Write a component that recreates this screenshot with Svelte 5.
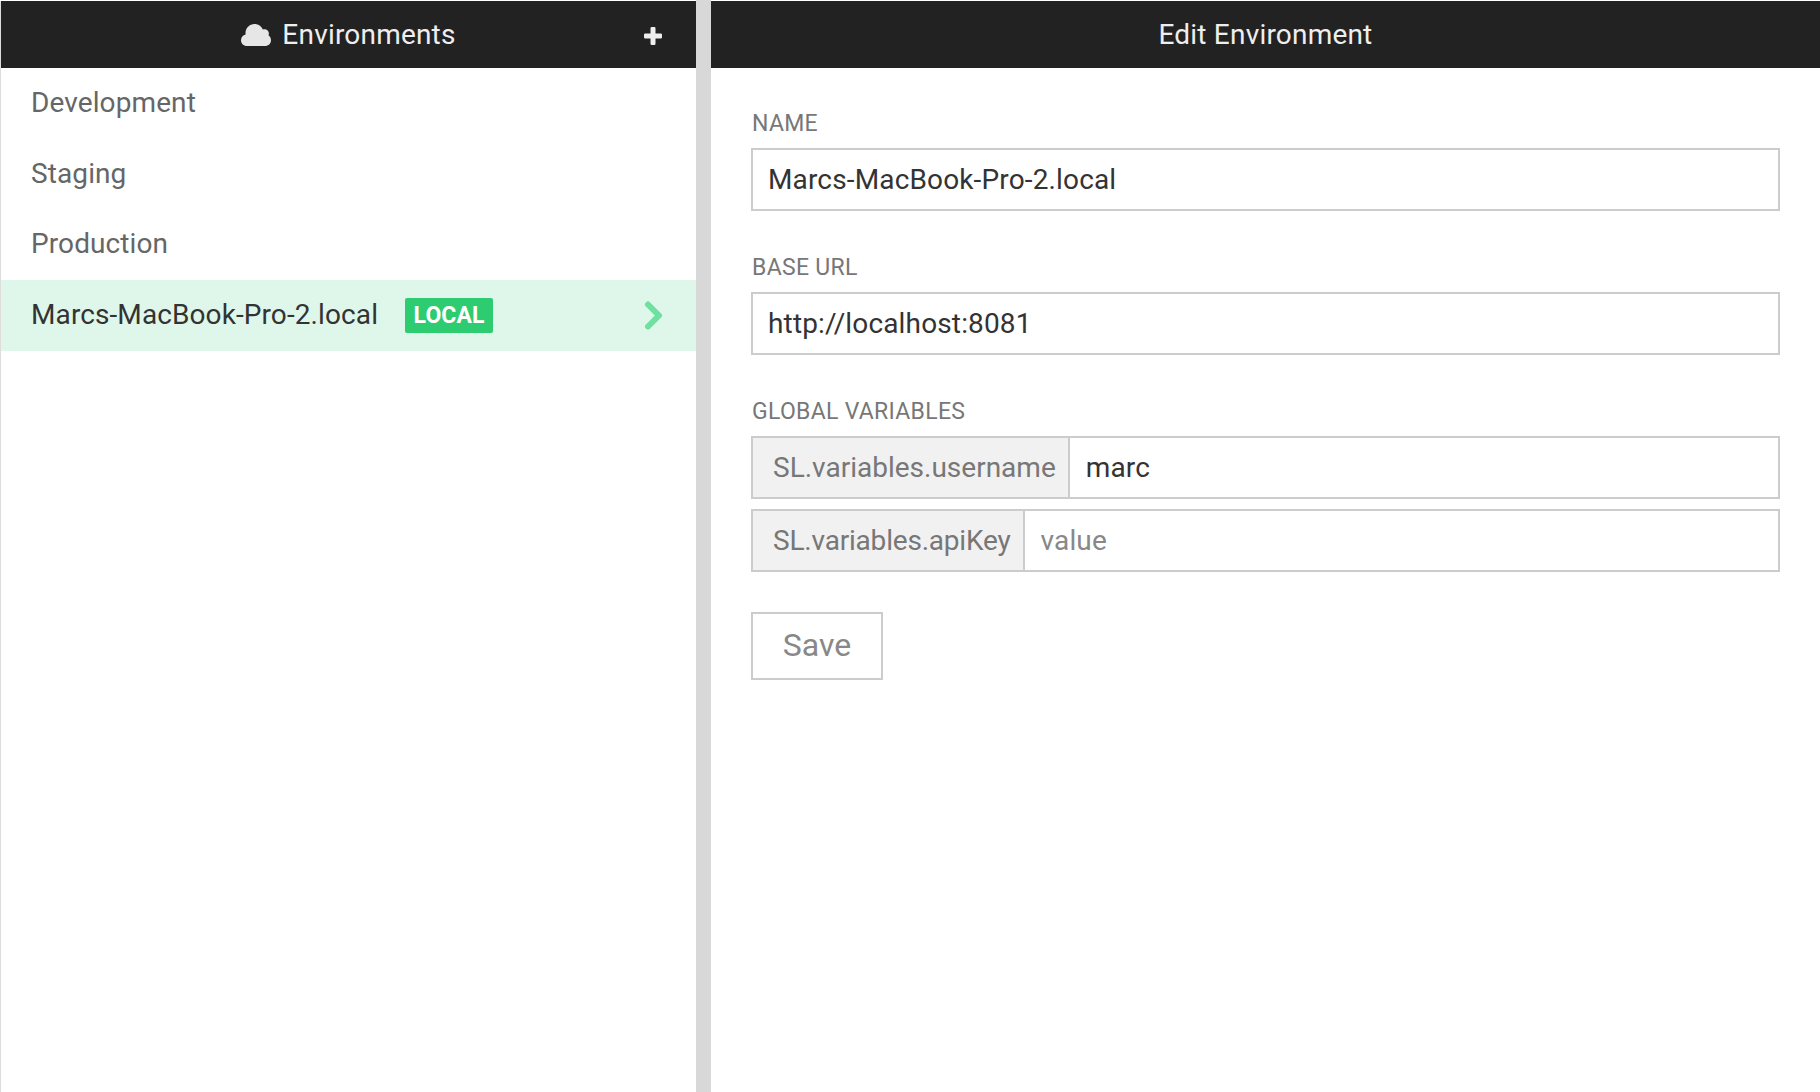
<script>
  const environments = [
    { name: 'Development' },
    { name: 'Staging' },
    { name: 'Production' },
    { name: 'Marcs-MacBook-Pro-2.local', local: true }
  ];
</script>

<div class="page">
  <aside class="sidebar">
    <header class="bar side-bar">
      <span></span>
      <h1 class="title">
        <svg class="cloud" viewBox="0 0 30 22" aria-hidden="true">
          <path d="M6 22C2.600 22 0 19.500 0 16.200C0 13.400 1.900 11 4.600 10.400C4.500 9.900 4.500 9.500 4.500 9C4.500 4 8.500 0 13.500 0C17.200 0 20.400 2.200 21.800 5.500C22.400 5.300 23 5.200 23.600 5.200C26 5.200 27.900 7 27.900 9.400C27.900 10.100 27.700 10.700 27.500 11.300C29 12.400 30 14.200 30 16.200C30 19.500 27.400 22 24 22Z" />
        </svg>
        Environments
      </h1>
      <button class="add" aria-label="Add environment">
        <svg viewBox="0 0 18 18" aria-hidden="true">
          <path d="M6.500 1.200Q6.500 0 7.700 0H10.300Q11.500 0 11.500 1.200V6.500H16.800Q18 6.500 18 7.700V10.300Q18 11.500 16.800 11.500H11.500V16.800Q11.500 18 10.300 18H7.700Q6.500 18 6.500 16.800V11.500H1.200Q0 11.500 0 10.300V7.700Q0 6.500 1.200 6.500H6.500Z" />
        </svg>
      </button>
    </header>
    <ul class="env-list">
      {#each environments as env}
        <li class="env" class:active={env.local}>
          <span>{env.name}</span>
          {#if env.local}
            <span class="badge">LOCAL</span>
            <svg class="chevron" viewBox="0 0 19 29" aria-hidden="true">
              <path d="M4 3.500L15 14.500L4 25.500" />
            </svg>
          {/if}
        </li>
      {/each}
    </ul>
  </aside>

  <div class="gutter"></div>

  <main class="editor">
    <header class="bar main-bar"><h1 class="title">Edit Environment</h1></header>
    <form class="form">
      <label class="field">
        <span class="label">NAME</span>
        <input class="input" value="Marcs-MacBook-Pro-2.local" />
      </label>
      <label class="field">
        <span class="label">BASE URL</span>
        <input class="input" value="http://localhost:8081" />
      </label>
      <div class="field vars">
        <span class="label">GLOBAL VARIABLES</span>
        <label class="group">
          <span class="addon">SL.variables.username</span>
          <input class="group-input" value="marc" />
        </label>
        <label class="group">
          <span class="addon tight">SL.variables.apiKey</span>
          <input class="group-input" placeholder="value" />
        </label>
      </div>
      <button class="save" type="button">Save</button>
    </form>
  </main>
</div>

<style>
  :global(body) {
    margin: 0;
    background: #fff;
    overflow: hidden;
  }

  .page {
    display: flex;
    height: 1092px;
    padding-top: 1px;
    box-sizing: border-box;
    font-family: Roboto, "Liberation Sans", sans-serif;
    color: #555;
    background: #fff;
  }

  .sidebar {
    width: 695px;
    margin-left: 1px;
    flex: none;
    box-shadow: -1px 0 0 #ddd;
  }

  .gutter {
    width: 15px;
    flex: none;
    margin-top: -1px;
    background: #d8d8d8;
  }

  .editor {
    flex: 1;
    min-width: 0;
  }

  .bar {
    height: 67px;
    background: #222;
    color: #eee;
    box-sizing: border-box;
  }

  .side-bar {
    display: grid;
    grid-template-columns: 1fr auto 1fr;
    align-items: center;
  }

  .main-bar {
    display: flex;
    justify-content: center;
    align-items: center;
  }

  .title {
    display: flex;
    align-items: center;
    margin: 0;
    font-size: 28px;
    font-weight: 400;
    letter-spacing: 0.2px;
  }

  .cloud {
    width: 30px;
    height: 22px;
    margin-right: 11px;
    fill: #e6e6e6;
  }

  .add {
    justify-self: end;
    display: flex;
    width: 18px;
    height: 18px;
    margin: 2px 34px 0 0;
    padding: 0;
    border: 0;
    background: none;
  }

  .add svg {
    width: 18px;
    height: 18px;
    fill: #eee;
  }

  .env-list {
    list-style: none;
    margin: 0;
    padding: 0;
  }

  .env {
    display: flex;
    align-items: center;
    box-sizing: border-box;
    height: 70.75px;
    padding: 0 33px 2px 30px;
    font-size: 28px;
    letter-spacing: 0.1px;
    color: #666;
  }

  .env.active {
    background: #dff7ea;
    color: #333;
  }

  .badge {
    margin-left: 27px;
    padding: 0 8.5px;
    height: 35px;
    line-height: 35px;
    border-radius: 2px;
    background: #2ecc71;
    color: #fff;
    font-size: 23px;
    font-weight: 700;
    transform: translateY(1px);
  }

  .chevron {
    width: 19px;
    height: 29px;
    margin-left: auto;
    fill: none;
    stroke: #6ee09f;
    stroke-width: 6;
    stroke-linecap: round;
    stroke-linejoin: round;
    transform: translateY(1px);
  }

  .form {
    padding: 42px 40px 0;
    display: flex;
    flex-direction: column;
    align-items: stretch;
  }

  .field {
    display: block;
    margin-bottom: 43px;
  }

  .vars {
    margin-bottom: 40px;
  }

  .label {
    display: block;
    height: 38px;
    line-height: 28px;
    padding-left: 1px;
    font-size: 23px;
    color: #777;
    letter-spacing: 0.3px;
  }

  .input,
  .group-input {
    box-sizing: border-box;
    font: inherit;
    font-size: 28px;
    letter-spacing: 0.15px;
    color: #333;
    outline: none;
    background: #fff;
  }

  .input {
    display: block;
    width: 100%;
    height: 63px;
    padding: 0 15px;
    border: 2px solid #ccc;
  }

  .group {
    display: flex;
    height: 63px;
    box-sizing: border-box;
    border: 2px solid #ccc;
  }

  .group + .group {
    margin-top: 10px;
  }

  .addon {
    display: flex;
    align-items: center;
    padding: 0 12px 0 20px;
    border-right: 2px solid #ccc;
    background: #f1f1f1;
    color: #777;
    font-size: 28px;
  }

  .addon.tight {
    letter-spacing: -0.2px;
  }

  .group-input {
    flex: 1;
    min-width: 0;
    padding: 0 16px;
    border: 0;
  }

  .group-input::placeholder {
    color: #888;
    opacity: 1;
  }

  .save {
    align-self: flex-start;
    width: 132px;
    height: 68px;
    box-sizing: border-box;
    border: 2px solid #ccc;
    background: #fff;
    color: #888;
    font: inherit;
    font-size: 32px;
    padding: 0 0 2px;
  }
</style>
